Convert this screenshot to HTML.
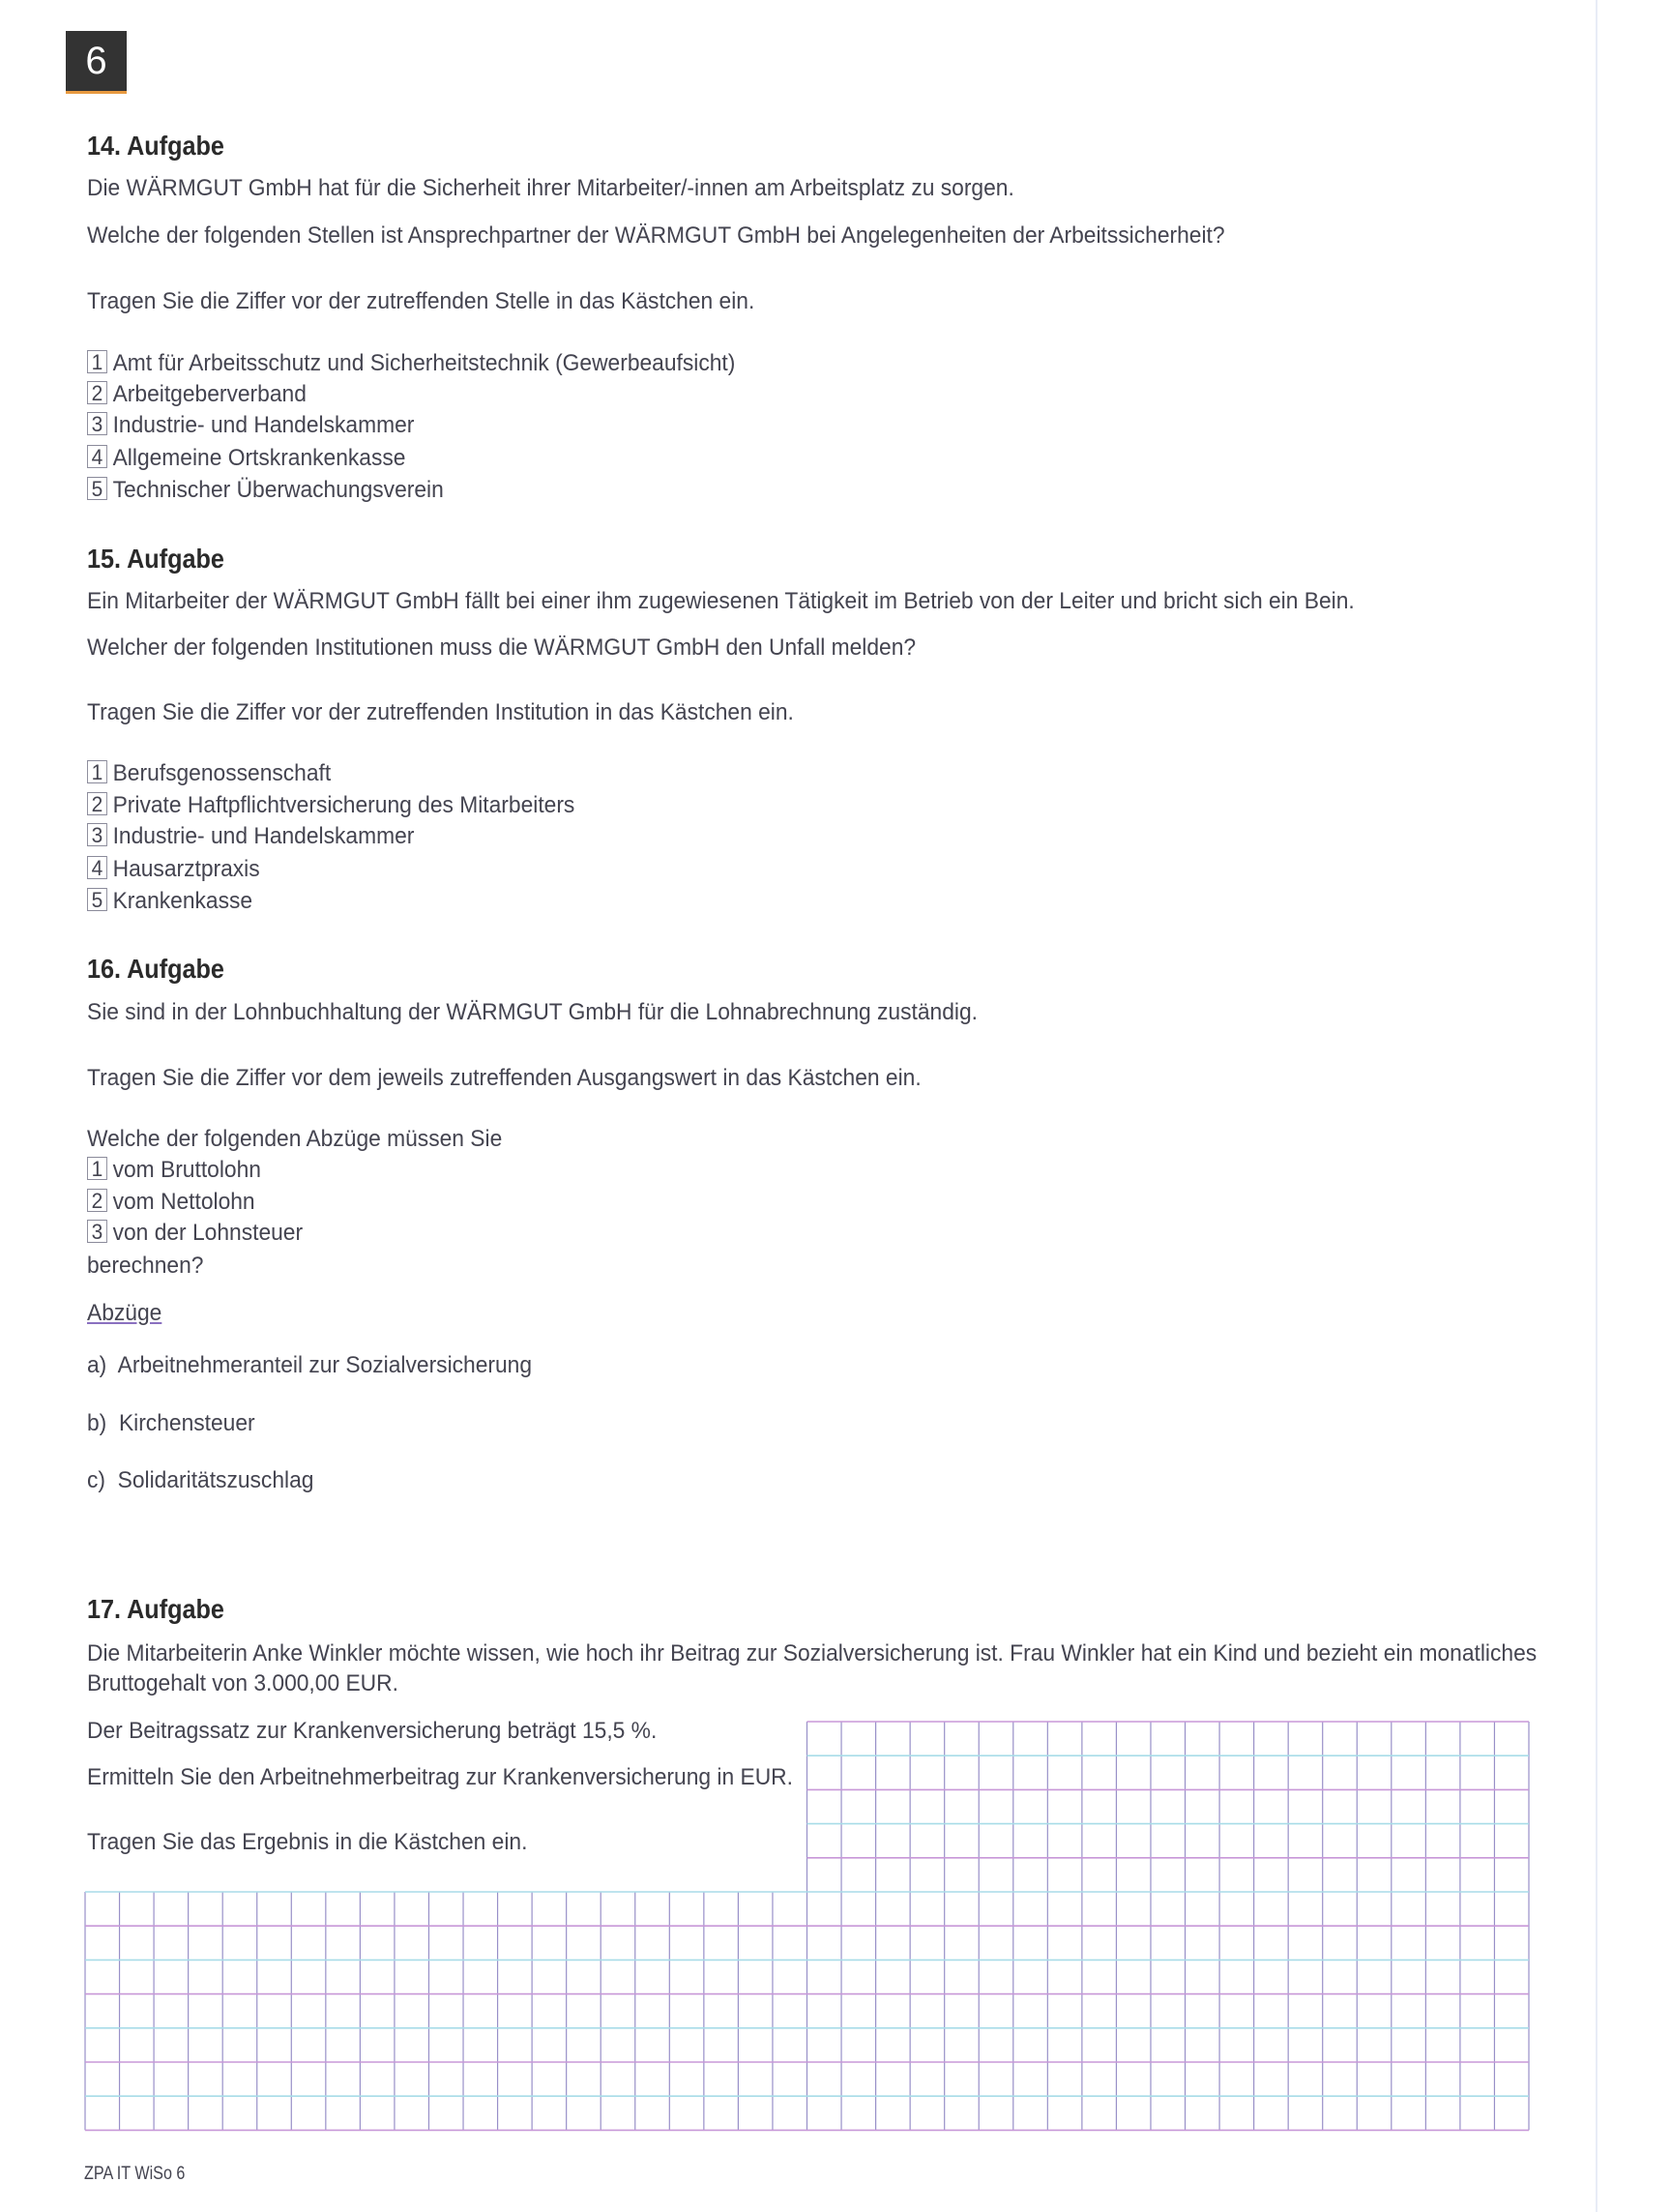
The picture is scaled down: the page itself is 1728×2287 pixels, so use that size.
<!DOCTYPE html>
<html><head><meta charset="utf-8"><style>
html,body{margin:0;padding:0;background:#fff}
body{width:1728px;height:2287px;position:relative;overflow:hidden;font-family:"Liberation Sans",sans-serif;color:#444450}
.t{position:absolute;left:90px;font-size:24px;line-height:28px;white-space:nowrap;transform-origin:0 0;transform:scaleX(.95);margin-top:4px}
.h{position:absolute;left:90px;font-size:28px;font-weight:bold;color:#2a2a2a;white-space:nowrap;transform-origin:0 0;transform:scaleX(.9);line-height:32px;margin-top:3px}
.b{display:inline-block;width:22px;height:24px;border:1.5px solid #8a8a9a;text-align:center;line-height:24px;margin-right:6px;font-size:22px;vertical-align:top;box-sizing:border-box}
</style></head><body>
<div style="position:absolute;left:68px;top:32px;width:63px;height:62px;background:#333;color:#fff;font-size:40px;text-align:center;line-height:62px">6</div>
<div style="position:absolute;left:68px;top:94px;width:63px;height:3px;background:#e89a40"></div>
<div style="position:absolute;left:1650px;top:0;width:2px;height:2287px;background:#e8ecf6"></div>

<div class="h" style="top:132px">14. Aufgabe</div>
<div class="t" style="top:177px">Die WÄRMGUT GmbH hat für die Sicherheit ihrer Mitarbeiter/-innen am Arbeitsplatz zu sorgen.</div>
<div class="t" style="top:226px">Welche der folgenden Stellen ist Ansprechpartner der WÄRMGUT GmbH bei Angelegenheiten der Arbeitssicherheit?</div>
<div class="t" style="top:294px">Tragen Sie die Ziffer vor der zutreffenden Stelle in das Kästchen ein.</div>
<div class="t" style="top:358px"><span class="b">1</span>Amt für Arbeitsschutz und Sicherheitstechnik (Gewerbeaufsicht)</div>
<div class="t" style="top:390px"><span class="b">2</span>Arbeitgeberverband</div>
<div class="t" style="top:422px"><span class="b">3</span>Industrie- und Handelskammer</div>
<div class="t" style="top:456px"><span class="b">4</span>Allgemeine Ortskrankenkasse</div>
<div class="t" style="top:489px"><span class="b">5</span>Technischer Überwachungsverein</div>

<div class="h" style="top:559px">15. Aufgabe</div>
<div class="t" style="top:604px">Ein Mitarbeiter der WÄRMGUT GmbH fällt bei einer ihm zugewiesenen Tätigkeit im Betrieb von der Leiter und bricht sich ein Bein.</div>
<div class="t" style="top:652px">Welcher der folgenden Institutionen muss die WÄRMGUT GmbH den Unfall melden?</div>
<div class="t" style="top:719px">Tragen Sie die Ziffer vor der zutreffenden Institution in das Kästchen ein.</div>
<div class="t" style="top:782px"><span class="b">1</span>Berufsgenossenschaft</div>
<div class="t" style="top:815px"><span class="b">2</span>Private Haftpflichtversicherung des Mitarbeiters</div>
<div class="t" style="top:847px"><span class="b">3</span>Industrie- und Handelskammer</div>
<div class="t" style="top:881px"><span class="b">4</span>Hausarztpraxis</div>
<div class="t" style="top:914px"><span class="b">5</span>Krankenkasse</div>

<div class="h" style="top:983px">16. Aufgabe</div>
<div class="t" style="top:1029px">Sie sind in der Lohnbuchhaltung der WÄRMGUT GmbH für die Lohnabrechnung zuständig.</div>
<div class="t" style="top:1097px">Tragen Sie die Ziffer vor dem jeweils zutreffenden Ausgangswert in das Kästchen ein.</div>
<div class="t" style="top:1160px">Welche der folgenden Abzüge müssen Sie</div>
<div class="t" style="top:1192px"><span class="b">1</span>vom Bruttolohn</div>
<div class="t" style="top:1225px"><span class="b">2</span>vom Nettolohn</div>
<div class="t" style="top:1257px"><span class="b">3</span>von der Lohnsteuer</div>
<div class="t" style="top:1291px">berechnen?</div>
<div class="t" style="top:1340px;text-decoration:underline;text-decoration-color:#8a70c0">Abzüge</div>
<div class="t" style="top:1394px">a)&nbsp; Arbeitnehmeranteil zur Sozialversicherung</div>
<div class="t" style="top:1454px">b)&nbsp; Kirchensteuer</div>
<div class="t" style="top:1513px">c)&nbsp; Solidaritätszuschlag</div>

<div class="h" style="top:1645px">17. Aufgabe</div>
<div class="t" style="top:1692px">Die Mitarbeiterin Anke Winkler möchte wissen, wie hoch ihr Beitrag zur Sozialversicherung ist. Frau Winkler hat ein Kind und bezieht ein monatliches</div>
<div class="t" style="top:1723px">Bruttogehalt von 3.000,00 EUR.</div>
<div class="t" style="top:1772px">Der Beitragssatz zur Krankenversicherung beträgt 15,5 %.</div>
<div class="t" style="top:1820px">Ermitteln Sie den Arbeitnehmerbeitrag zur Krankenversicherung in EUR.</div>
<div class="t" style="top:1887px">Tragen Sie das Ergebnis in die Kästchen ein.</div>

<svg style="position:absolute;left:0;top:0" width="1728" height="2287">
<g stroke="#9890c8" stroke-width="1.2" id="g"></g>
</svg>
<script>
(function(){
var g=document.getElementById('g'),s='';
var x0=88,x1=1581,cw=(x1-x0)/42,y0=1780,rh=35.2,ymid=y0+5*rh,y1=y0+12*rh;
for(var i=0;i<=42;i++){var x=x0+i*cw;var top=i>=21?y0:ymid;s+='<line x1="'+x+'" y1="'+top+'" x2="'+x+'" y2="'+y1+'"/>';}
for(var j=0;j<=12;j++){var y=y0+j*rh;var l=j>=5?x0:x0+21*cw;var c=j%2?'#a8dce8':'#c898d8';s+='<line stroke="'+c+'" stroke-width="1.6" x1="'+l+'" y1="'+y+'" x2="'+x1+'" y2="'+y+'"/>';}
g.innerHTML=s;})();
</script>
<div style="position:absolute;left:87px;top:2237px;font-size:19px;white-space:nowrap;transform-origin:0 0;transform:scaleX(.85);color:#444450">ZPA IT WiSo 6</div>
</body></html>
